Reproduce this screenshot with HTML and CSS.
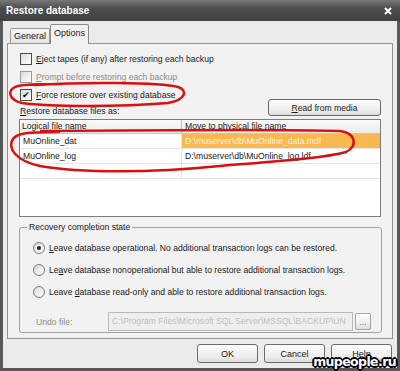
FILE: index.html
```html
<!DOCTYPE html>
<html lang="en">
    <head>
        <meta charset="UTF-8">
        <title>Restore database</title>
        <link rel="stylesheet" href="styles.css">
    </head>
    <body>
        <div class="window">
            <div class="titlebar">
                <span class="title">Restore database</span>
                <svg class="close" width="8" height="8" viewBox="0 0 8 8">
                    <path d="M1 1 L7 7 M7 1 L1 7" stroke="#fff" stroke-width="2"/>
                </svg>
            </div>
            <div class="frame">
                <div class="tabs">
                    <div class="tab">General</div>
                    <div class="tab active">Options</div>
                </div>
                <div class="panel">
                    <div class="top">
                        <div class="checks">
                            <div class="check"><span class="box"></span><span><u>E</u>ject tapes (if any) after restoring each backup</span></div>
                            <div class="check disabled"><span class="box"></span><span><u>P</u>rompt before restoring each backup</span></div>
                            <div class="check"><span class="box checked">&#10004;</span><span><u>F</u>orce restore over existing database</span></div>
                            <div class="files-label"><u>R</u>estore database files as:</div>
                        </div>
                        <div class="btn media"><span><u>R</u>ead from media</span></div>
                    </div>

                    <div class="list">
                        <div class="row head">
                            <div class="c1">Logical file name</div>
                            <div class="c2">Move to physical file name</div>
                        </div>
                        <div class="row">
                            <div class="c1">MuOnline_dat</div>
                            <div class="c2 selected">D:\muserver\db\MuOnline_data.mdf</div>
                        </div>
                        <div class="row">
                            <div class="c1">MuOnline_log</div>
                            <div class="c2">D:\muserver\db\MuOnline_log.ldf</div>
                        </div>
                        <div class="row">
                            <div class="c1"></div>
                            <div class="c2"></div>
                        </div>
                    </div>

                    <fieldset class="group">
                        <legend>Recovery completion state</legend>
                        <div class="radio"><span class="dot on"></span><span><u>L</u>eave database operational. No additional transaction logs can be restored.</span></div>
                        <div class="radio"><span class="dot"></span><span>Le<u>a</u>ve database nonoperational but able to restore additional transaction logs.</span></div>
                        <div class="radio"><span class="dot"></span><span>Leave <u>d</u>atabase read-only and able to restore additional transaction logs.</span></div>
                        <div class="undo">
                            <span class="undo-label">Undo file:</span>
                            <div class="field">C:\Program Files\Microsoft SQL Server\MSSQL\BACKUP\UN</div>
                            <div class="btn dots">...</div>
                        </div>
                    </fieldset>
                </div>

                <div class="buttons">
                    <div class="btn">OK</div>
                    <div class="btn">Cancel</div>
                    <div class="btn">Help</div>
                </div>
            </div>

            <!-- red marker rings drawn over the dialog -->
            <svg class="marks" width="400" height="371" viewBox="0 0 400 371">
                <path d="M34 85 C80 82 160 82 178 87 C188 90 186 100 168 103 C120 107 50 107 22 103 C9 100 7 91 15 87 C20 84 40 84 62 84" fill="none" stroke="#d81010" stroke-width="2.5"/>
                <path d="M40 131 C150 130 290 129 340 131 C356 133 358 146 346 152 C325 158 280 161 220 166 C150 173 80 173 40 166 C16 161 7 148 13 139 C17 133 28 132 60 132" fill="none" stroke="#d81010" stroke-width="2.5"/>
            </svg>
            <div class="watermark">mupeople.ru</div>
        </div>
    </body>
</html>
```

FILE: styles.css
```css
* {
    box-sizing: border-box;
}

body {
    margin: 0;
    padding: 0;
    font-family: "Liberation Sans", Arial, sans-serif;
    font-size: 8.6px;
    color: #1a1a1a;
    background-color: #fff;
}

.window {
    position: relative;
    width: 400px;
    height: 371px;
    display: flex;
    flex-direction: column;
    overflow: hidden;
}

.titlebar {
    height: 21px;
    display: flex;
    align-items: center;
    justify-content: space-between;
    padding: 0 8px 0 6px;
    background: linear-gradient(#777, #4d4d4d 40%, #404040);
    color: #fff;
}

.title {
    font-weight: bold;
    font-size: 10px;
}

.frame {
    flex: 1;
    display: flex;
    flex-direction: column;
    background-color: #ebebeb;
    border: 3px solid #585858;
    border-top: none;
    padding: 0 4px;
}

/* Tabs */

.tabs {
    display: flex;
    align-items: flex-end;
    height: 22px;
    padding-left: 3px;
}

.tab {
    height: 16px;
    width: 40px;
    text-align: center;
    line-height: 15px;
    font-size: 9px;
    border: 1px solid #999;
    border-bottom: none;
    border-radius: 2px 2px 0 0;
    background: linear-gradient(#f6f6f6, #e2e2e2);
    margin-bottom: -1px;
}

.tab.active {
    height: 20px;
    width: 39px;
    line-height: 17px;
    background: #f2f2f2;
    border-color: #8a8a8a;
    position: relative;
    z-index: 1;
}

.panel {
    height: 296px;
    border: 1px solid #919191;
    background-color: #f2f2f2;
    padding: 6px 11px 0 11px;
}

/* Options */

.top {
    display: flex;
    justify-content: space-between;
    align-items: flex-end;
    height: 67px;
}

.checks {
    padding-left: 1px;
}

.check {
    height: 18px;
    display: flex;
    align-items: center;
    gap: 4px;
}

.check.disabled {
    color: #8c8c8c;
}

.box {
    width: 12px;
    height: 12px;
    border: 1px solid #4a4a4a;
    background: linear-gradient(135deg, #dcdcdc, #fff);
    font-size: 9px;
    line-height: 10px;
    text-align: center;
    color: #111;
}

.check.disabled .box {
    border-color: #9a9a9a;
}

.files-label {
    height: 13px;
    line-height: 14px;
}

.btn {
    display: flex;
    align-items: center;
    justify-content: center;
    border: 1px solid #6b6b6b;
    border-radius: 3px;
    background: linear-gradient(#fdfdfd, #ececec 70%, #dcdcdc);
    font-size: 8.6px;
}

.btn.media {
    width: 113px;
    height: 17px;
    margin-bottom: 1px;
}

/* File list */

.list {
    margin-top: 2px;
    height: 98px;
    border: 1px solid #7d7d7d;
    background-color: #fff;
}

.row {
    display: flex;
    height: 15px;
    border-bottom: 1px solid #e6e6e6;
}

.row.head {
    height: 14px;
    background: linear-gradient(#fafafa, #ececec);
    border-bottom: 1px solid #c8c8c8;
}

.c1,
.c2 {
    padding-left: 3px;
    line-height: 14px;
    white-space: nowrap;
    overflow: hidden;
}

.c1 {
    width: 162px;
    border-right: 1px solid #e6e6e6;
}

.c2 {
    flex: 1;
}

.row.head .c1 {
    padding-left: 2px;
    line-height: 13px;
    border-right-color: #c0c0c0;
}

.row.head .c2 {
    line-height: 13px;
}

.c2.selected {
    background-color: #f7b852;
    color: #fff6e0;
}

/* Recovery group */

.group {
    margin: 5px 0 0 0;
    height: 111px;
    border: 1px solid #a2a2a2;
    border-radius: 3px;
    padding: 4px 10px 0 13px;
}

.group legend {
    padding: 0 2px;
    margin-left: -6px;
    line-height: 11px;
}

.radio {
    height: 22px;
    display: flex;
    align-items: center;
    gap: 4px;
}

.dot {
    width: 12px;
    height: 12px;
    border-radius: 50%;
    border: 1px solid #7a7a7a;
    background: linear-gradient(135deg, #d8d8d8, #fff);
    display: flex;
    align-items: center;
    justify-content: center;
}

.dot.on::after {
    content: "";
    width: 4px;
    height: 4px;
    border-radius: 50%;
    background-color: #222;
}

.undo {
    display: flex;
    align-items: center;
    margin-top: 9px;
    padding-left: 3px;
}

.undo-label {
    color: #8c8c8c;
    width: 72px;
}

.field {
    width: 245px;
    height: 19px;
    border: 1px solid #b8b8b8;
    background-color: #efefef;
    color: #bdbdbd;
    line-height: 17px;
    padding-left: 3px;
    white-space: nowrap;
    overflow: hidden;
}

.btn.dots {
    width: 16px;
    height: 17px;
    margin-left: 2px;
    color: #666;
    border-color: #a5a5a5;
    border-radius: 2px;
}

/* Dialog buttons */

.buttons {
    display: flex;
    justify-content: flex-end;
    gap: 6px;
    margin-top: 5px;
    padding-right: 1px;
}

.buttons .btn {
    width: 61px;
    height: 19px;
    font-size: 9px;
}

/* Overlays */

.marks {
    position: absolute;
    left: 0;
    top: 0;
    pointer-events: none;
}

.watermark {
    position: absolute;
    right: 4px;
    bottom: 2px;
    font-family: "DejaVu Sans", sans-serif;
    font-weight: bold;
    font-size: 12.5px;
    letter-spacing: -0.6px;
    color: #fff;
    text-shadow: -1px -1px 0 #000, 1px -1px 0 #000, -1px 1px 0 #000, 1px 1px 0 #000,
        0 -2px 0 #000, 0 2px 0 #000, -2px 0 0 #000, 2px 0 0 #000;
}
```
